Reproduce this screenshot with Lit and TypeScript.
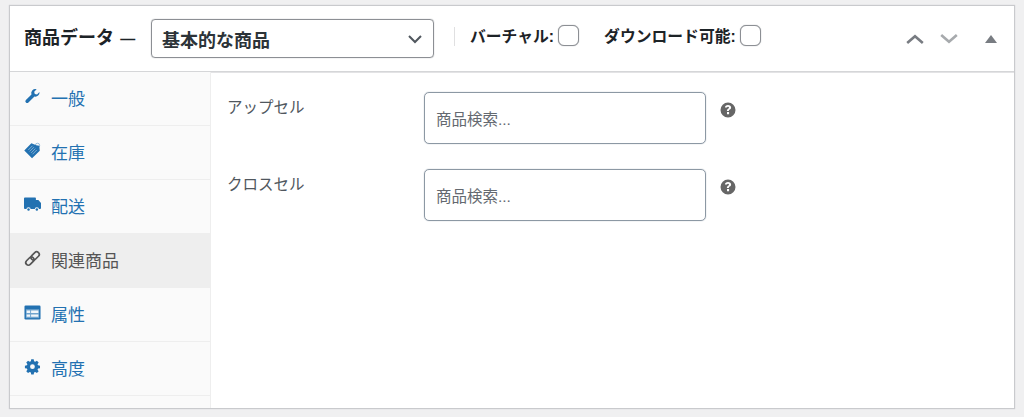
import { LitElement, html, css, svg } from "lit";
import { customElement } from "lit/decorators.js";

const tabs = [
  { label: "一般", icon: svg`<path d="M16.400 4.300l-2.600 2.600-2.400-.6-.6-2.400 2.600-2.600a4.300 4.300 0 0 0-5.500 5.500L2 12.600a1.900 1.900 0 1 0 2.700 2.700l6.400-6.300a4.300 4.300 0 0 0 5.300-4.700z"/>` },
  { label: "在庫", icon: svg`<circle class="loop" cx="14.300" cy="3.600" r="2.300"/><path d="M7.800 1.200.3 9l8.200 8.300 8.200-8.100-.5-5.200-3.200-.5z"/><path class="hatch" d="m4.500 8.500 4.500-4.500M6 10l4.500-4.500M7.500 11.500 12 7M9 13l4.500-4.500"/>` },
  { label: "配送", icon: svg`<path d="M1 1.600h10.800a.8.8 0 0 1 .8.8v1.800h2.600l2.800 3.200v5.400a1 1 0 0 1-1 1H1a1 1 0 0 1-1-1V2.600a1 1 0 0 1 1-1z"/><circle class="ring" cx="4.800" cy="14.300" r="2.300"/><circle class="ring" cx="13.600" cy="14.300" r="2.300"/><circle cx="4.800" cy="14.300" r="1.300"/><circle cx="13.600" cy="14.300" r="1.300"/>` },
  { label: "関連商品", active: true, icon: svg`<g fill="none" stroke="currentColor" stroke-width="1.800"><rect x="1.250" y="9" width="10" height="5.500" rx="2.750" transform="rotate(-45 6.250 11.750)"/><rect x="6.750" y="3.500" width="10" height="5.500" rx="2.750" transform="rotate(-45 11.750 6.250)"/></g>` },
  { label: "属性", icon: svg`<rect x=".5" y="1.500" width="17" height="15" rx="1.300"/><path class="panel" d="M2 5.500h14v9.500H2z"/><path class="rows" d="M2.800 7h3.700v2.500H2.800zm4.700 0h7.700v2.500H7.500zM2.800 11h3.700v2.500H2.800zm4.700 0h7.700v2.500H7.500z"/>` },
  { label: "高度", icon: svg`<path transform="translate(.5 .5) scale(.94)" fill-rule="evenodd" d="M7.600 1h2.800l.4 2.200 1.300.6 1.900-1.300 2 2-1.300 1.900.6 1.300 2.200.4v2.800l-2.200.4-.6 1.300 1.300 1.900-2 2-1.900-1.300-1.300.6-.4 2.200H7.600l-.4-2.200-1.300-.6L4 16.500l-2-2 1.300-1.900-.6-1.300L.5 10.900V8.100l2.200-.4.6-1.300L2 4.500l2-2 1.900 1.300 1.300-.6zM9 6.500a2.700 2.700 0 1 0 0 5.400 2.700 2.700 0 0 0 0-5.400z"/>` },
];

const help = html`<svg class="help" viewBox="0 0 16 16" aria-hidden="true"><path fill="#666" fill-rule="evenodd" d="M8 .5a7.500 7.500 0 1 1 0 15 7.500 7.500 0 0 1 0-15zM8 3C6.200 3 5 4 4.900 5.600h2c.1-.6.500-.9 1.100-.9s1 .3 1 .8c0 .5-.3.800-.9 1.200-.9.600-1.200 1.100-1.200 2.300h2c0-.7.200-1 .9-1.400.8-.6 1.300-1.200 1.300-2.200C11.100 3.900 9.900 3 8 3zM7 10v2.200h2.100V10z"/></svg>`;

@customElement("app-root")
export class AppRoot extends LitElement {
  static styles = css`
    :host {
      display: block;
      height: 417px;
      box-sizing: border-box;
      padding: 5px 9px 8px 9px;
      background: #f0f0f1;
      font-family: "Liberation Sans", "Noto Sans CJK JP", sans-serif;
      color: #3c434a;
      overflow: hidden;
    }
    .box {
      height: 100%;
      box-sizing: border-box;
      border: 1px solid #c9cacd;
      box-shadow: 0 0 1px #c9cacd;
      background: #fff;
      display: flex;
      flex-direction: column;
    }
    .head {
      height: 66px;
      flex: none;
      box-sizing: border-box;
      border-bottom: 1px solid #d5d6d8;
      box-shadow: 0 1px 1px -0.5px #e3e3e5;
      display: flex;
      align-items: center;
      padding: 0 0 0 14px;
      font-weight: 700;
      color: #1d2327;
    }
    .title {
      font-size: 18px;
      width: 127px;
      flex: none;
      white-space: nowrap;
      margin-top: -5px;
    }
    .dash { font-size: 15px; margin-left: 2px; }
    .select {
      width: 283px;
      height: 39px;
      flex: none;
      box-sizing: border-box;
      border: 1px solid #8c8f94;
      box-shadow: 0 0 1px #8c8f94;
      border-radius: 4px;
      display: flex;
      align-items: center;
      justify-content: space-between;
      padding: 0 10px 0 10px;
      font-size: 18px;
      color: #2c3338;
    }
    .select svg { width: 16px; height: 16px; }
    .sep {
      width: 1px;
      height: 19px;
      background: #e0e0e1;
      margin: -5px 15px 0 20px;
      flex: none;
    }
    .check {
      display: flex;
      align-items: center;
      gap: 4px;
      font-size: 15.800px;
      margin: -6px 25px 0 0;
      white-space: nowrap;
    }
    .check i {
      display: block;
      width: 21px;
      height: 21px;
      box-sizing: border-box;
      border: 1px solid #8c8f94;
      box-shadow: 0 0 1px #8c8f94;
      border-radius: 6px;
      background: #fff;
    }
    .actions {
      margin-left: auto;
      display: flex;
      align-items: center;
      margin-right: 17px;
    }
    .actions svg { display: block; }
    .c1 { width: 18px; height: 10px; margin-right: 16px; color: #787c82; }
    .c2 { width: 18px; height: 10px; margin-right: 27px; color: #a7aaad; }
    .c3 { width: 12px; height: 8px; color: #787c82; }
    .body { flex: 1; display: flex; min-height: 0; }
    .side {
      width: 201px;
      flex: none;
      box-sizing: border-box;
      background: #fafafa;
      border-right: 1px solid #eee;
      list-style: none;
      margin: 0;
      padding: 0;
    }
    .tab {
      height: 54px;
      box-sizing: border-box;
      border-bottom: 1px solid #eee;
      display: flex;
      align-items: center;
      padding: 0 0 2px 14px;
      gap: 10px;
      color: #2271b1;
      font-size: 17px;
    }
    .tab svg { width: 17px; height: 17px; fill: currentColor; flex: none; margin-top: -3px; overflow: visible; }
    .loop { fill: none; stroke: #8fb8d8; stroke-width: 1; }
    .hatch { fill: none; stroke: #fff; stroke-opacity: 0.55; stroke-width: 0.8; }
    .ring { fill: #fafafa; }
    .panel { fill: #6fa3cd; }
    .rows { fill: #fff; fill-opacity: 0.9; }
    .tab.active { background: #eee; color: #555; border-bottom-color: #eee; }
    .main { flex: 1; padding: 20px 0 0 16px; display: flex; flex-direction: column; gap: 25px; }
    .row { display: flex; align-items: flex-start; font-size: 15.500px; color: #50575e; }
    .row label { width: 197px; flex: none; margin-top: 6px; line-height: 20px; }
    .input {
      width: 282px;
      height: 52px;
      flex: none;
      box-sizing: border-box;
      border: 1px solid #8c98a4;
      box-shadow: 0 0 1px #8c98a4;
      border-radius: 5px;
      display: flex;
      align-items: center;
      padding: 0 11px;
      color: #646970;
      font-size: 15.500px;
    }
    .help { width: 16px; height: 16px; margin: 10px 0 0 14px; flex: none; }
  `;

  render() {
    return html`
      <div class="box">
        <div class="head">
          <span class="title">商品データ<span class="dash"> —</span></span>
          <div class="select">
            <span>基本的な商品</span>
            <svg viewBox="0 0 16 16" fill="none" stroke="#50575e" stroke-width="2"><path d="m2 5 6 6 6-6"/></svg>
          </div>
          <span class="sep"></span>
          <div class="check">バーチャル:<i></i></div>
          <div class="check">ダウンロード可能:<i></i></div>
          <div class="actions">
            <svg class="c1" viewBox="0 0 18 10" fill="none" stroke="currentColor" stroke-width="2.600"><path d="m1.200 9 7.800-6.800 7.800 6.800"/></svg>
            <svg class="c2" viewBox="0 0 18 10" fill="none" stroke="currentColor" stroke-width="2.600"><path d="m1.200 1 7.800 6.800 7.800-6.800"/></svg>
            <svg class="c3" viewBox="0 0 12 8" fill="currentColor"><path d="M6 0l6 8H0z"/></svg>
          </div>
        </div>
        <div class="body">
          <ul class="side">
            ${tabs.map(
              (t) => html`<li class="tab ${t.active ? "active" : ""}">
                <svg viewBox="0 0 18 18" aria-hidden="true">${t.icon}</svg><span>${t.label}</span>
              </li>`
            )}
          </ul>
          <div class="main">
            <div class="row"><label>アップセル</label><div class="input">商品検索...</div>${help}</div>
            <div class="row"><label>クロスセル</label><div class="input">商品検索...</div>${help}</div>
          </div>
        </div>
      </div>
    `;
  }
}
